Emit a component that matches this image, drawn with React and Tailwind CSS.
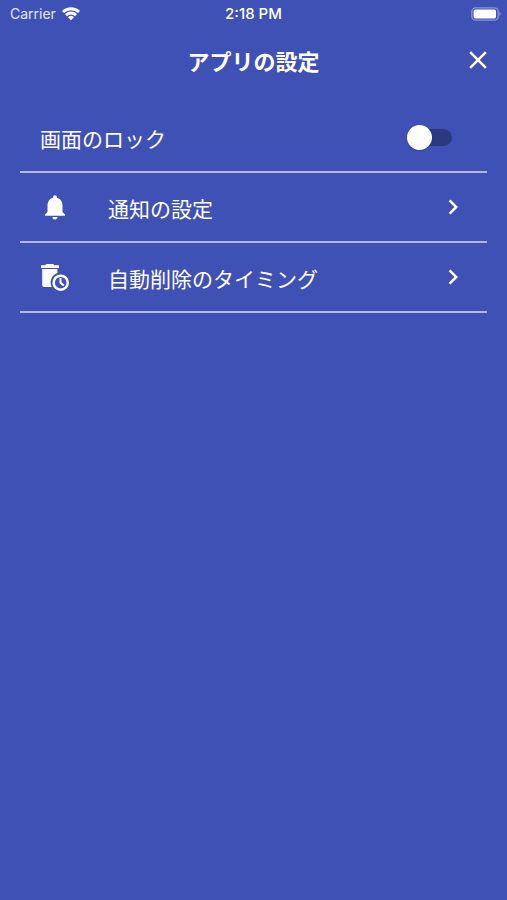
import React, { useState } from "react";
import { MdChevronRight, MdClose, MdNotifications } from "react-icons/md";

const WifiIcon = () => (
  <svg width="18" height="14" viewBox="0 0 18 14" fill="currentColor" aria-hidden="true">
    <path d="M0 4a12.8 12.8 0 0 1 18 0l-2 2.1a9.9 9.9 0 0 0-14 0Z" />
    <path d="M3 7.1a8.5 8.5 0 0 1 12 0l-2 2.1a5.6 5.6 0 0 0-8 0Z" />
    <path d="M9 13.3 6 10.2a4.3 4.3 0 0 1 6 0Z" />
  </svg>
);

const BatteryIcon = () => (
  <svg width="30" height="14" viewBox="0 0 30 14" aria-hidden="true">
    <rect x="0.8" y="0.8" width="26.4" height="12.4" rx="3.8" fill="none" stroke="white" strokeOpacity="0.4" strokeWidth="1.3" />
    <rect x="2.6" y="2.6" width="22.4" height="8.8" rx="1.6" fill="white" />
    <path d="M28.4 4.8c1.6.7 1.6 3.7 0 4.4Z" fill="white" fillOpacity="0.4" />
  </svg>
);

const AutoDeleteIcon = () => (
  <svg width="30" height="30" viewBox="0 0 30 30" fill="currentColor" aria-hidden="true">
    <path d="M6.4 2h6.8l1.2 1.2H19V6H1V3.2h4.2Z" />
    <path d="M2.2 7h15.2v4.1a9.9 9.9 0 0 0-5.7 13.9H4.8a2.6 2.6 0 0 1-2.6-2.6Z" />
    <path
      fillRule="evenodd"
      d="M20.7 12.4a8.3 8.3 0 1 0 0 16.6 8.3 8.3 0 0 0 0-16.6Zm0 2.5a5.8 5.8 0 1 1 0 11.6 5.8 5.8 0 0 1 0-11.6Z"
    />
    <path d="M19.5 16h2v4.3l3 2.4-1.2 1.5-3.8-3Z" />
  </svg>
);

const menuItems = [
  { label: "通知の設定", icon: <MdNotifications size={30} /> },
  { label: "自動削除のタイミング", icon: <AutoDeleteIcon /> },
];

const App = () => {
  const [locked, setLocked] = useState(false);

  return (
    <div className="min-h-screen bg-[#3f51b5] text-white font-['Noto_Sans_CJK_JP',sans-serif]">
      {/* Status bar */}
      <div className="grid grid-cols-[1fr_auto_1fr] items-center h-7 px-1.5 text-sm font-['Inter',sans-serif]">
        <div className="flex items-center gap-1.5 pl-1">
          <span className="text-white/85">Carrier</span>
          <WifiIcon />
        </div>
        <div className="text-center text-[15px] font-medium">2:18 PM</div>
        <div className="flex justify-end">
          <BatteryIcon />
        </div>
      </div>

      {/* Header */}
      <header className="grid grid-cols-[44px_1fr_44px] items-center h-16">
        <h1 className="col-start-2 text-center text-[22px] font-bold">アプリの設定</h1>
        <button type="button" aria-label="閉じる" className="cursor-pointer">
          <MdClose size={30} />
        </button>
      </header>

      <main className="mx-5 pt-[11px]">
        <label className="flex items-center justify-between h-[70px] pl-5 pr-[19px] border-b-2 border-[#b2b9e1] text-[21px] cursor-pointer">
          <span className="pt-1">画面のロック</span>
          <span className="relative flex items-center w-[45px] h-[25px] mr-4">
            <input
              type="checkbox"
              role="switch"
              checked={locked}
              onChange={(e) => setLocked(e.target.checked)}
              className="peer sr-only"
            />
            <span className="w-full h-[17px] rounded-full bg-[#2b3980] peer-checked:bg-[#8c99e0]" />
            <span className="absolute left-0 size-[25px] rounded-full bg-white shadow-sm transition-transform peer-checked:translate-x-5" />
          </span>
        </label>

        {menuItems.map((item) => (
          <button
            key={item.label}
            type="button"
            className="flex items-center w-full h-[70px] pl-5 pr-[19px] border-b-2 border-[#b2b9e1] text-[21px] text-left cursor-pointer"
          >
            {item.icon}
            <span className="flex-1 ml-[38px] pt-1">{item.label}</span>
            <MdChevronRight size={30} />
          </button>
        ))}
      </main>
    </div>
  );
};

export default App;
